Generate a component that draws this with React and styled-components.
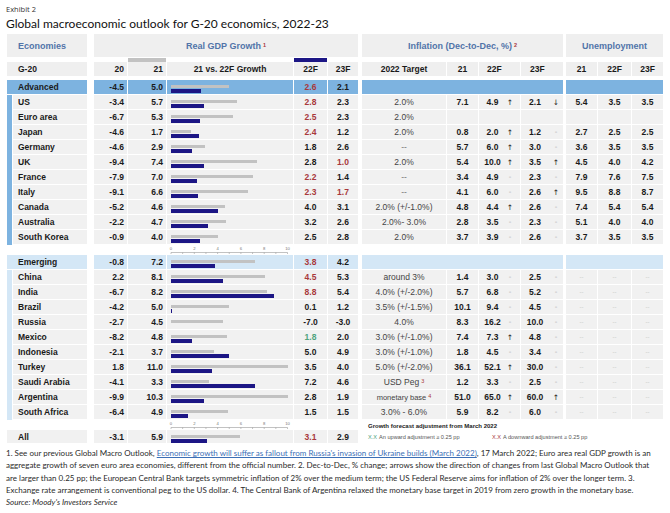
import React from 'react';
import styled, { createGlobalStyle } from 'styled-components';

const GlobalStyle = createGlobalStyle`
  html, body { margin: 0; padding: 0; background: #fff; }
  body { font-family: "Liberation Sans", Arial, sans-serif; color: #1a1a1a; }
`;

const COLS = '5px 74px 5px 33px 38px 126px 33px 30px 2px 84px 31px 41px 42px 1px 31px 33px 31px';
const SCALE = 11.65;
const RED = '#a8383b';
const GREEN = '#4fa37e';
const BLUE = '#7db3e0';
const LIGHT = '#d4e7f6';
const GREY = '#f1f1f1';
const HEAD = '#5174a9';

const Page = styled.div`
  width: 670px;
  height: 513px;
  overflow: hidden;
  box-sizing: border-box;
  padding: 4px 0 0 6px;
`;

const Exhibit = styled.div`
  font-family: "Open Sans", sans-serif;
  font-size: 7.5px;
  line-height: 11px;
  color: #333;
`;

const Title = styled.h1`
  margin: 0;
  font-family: Lato, sans-serif;
  font-weight: 400;
  font-size: 12px;
  line-height: 17px;
  color: #111;
`;

const Table = styled.div`
  margin-top: 2px;
  padding-left: 1px;
`;

const Row = styled.div`
  display: grid;
  grid-template-columns: ${COLS};
  column-gap: 1px;
  height: ${p => p.$h}px;
  margin-bottom: ${p => p.$mb || 0}px;
`;

const Cell = styled.div`
  grid-column: ${p => p.$col};
  box-sizing: border-box;
  border-bottom: ${p => (p.$flat ? 'none' : '1px solid #fff')};
  background: ${p => p.$bg || GREY};
  display: flex;
  align-items: center;
  justify-content: ${p => p.$justify || 'center'};
  padding: ${p => p.$pad || '0'};
  font-size: 8.5px;
  font-weight: ${p => (p.$light ? 400 : 700)};
  color: ${p => p.$color || '#1a1a1a'};
  white-space: nowrap;
`;

const HeadCell = styled(Cell)`
  font-size: 9px;
  color: ${HEAD};
  border-bottom: none;
  background: #efefef;
`;

const Sup = styled.sup`
  color: ${RED};
  font-size: 5.5px;
  margin-left: 2px;
  position: relative;
  top: -1px;
`;

const LegendBar = styled.div`
  grid-column: ${p => p.$col};
  height: 4px;
  align-self: start;
  margin-top: 1px;
  background: ${p => p.$color};
`;

const Chart = styled(Cell)`
  flex-direction: column;
  align-items: flex-start;
  justify-content: flex-start;
  padding: 5px 0 0 4px;
  gap: 1px;
`;

const Bar = styled.div`
  height: ${p => p.$h}px;
  background: ${p => p.$color};
`;

const Split = styled(Cell)`
  display: grid;
  grid-template-columns: ${p => p.$tpl};
  justify-content: start;
  align-items: center;
`;

const Num = styled.span`
  text-align: center;
`;

const Arrow = styled.span`
  text-align: center;
  font-family: "DejaVu Sans", sans-serif;
  font-weight: 400;
  font-size: ${p => (p.$dash ? '7px' : '7.5px')};
  color: ${p => (p.$dash ? '#aaa' : '#222')};
`;

const Dim = styled.span`
  font-size: 6px;
  font-weight: 400;
  color: #c4c4c4;
`;

const AxisCell = styled.div`
  grid-column: 6;
  display: flex;
  align-items: flex-start;
`;

const LegendTitle = styled.div`
  grid-column: 10 / 18;
  font-size: 6px;
  font-weight: 700;
  color: #222;
  padding-left: 6px;
  align-self: end;
  line-height: 8px;
`;

const LegendItems = styled.div`
  grid-column: 10 / 18;
  display: flex;
  align-items: center;
  padding-left: 6px;
  font-size: 5.6px;
  color: #555;
`;

const LegendItem = styled.span`
  width: ${p => p.$w}px;
  b { font-weight: 400; color: ${p => p.$color}; margin-right: 2px; }
`;

const Notes = styled.div`
  margin-top: 3px;
  font-family: Lato, sans-serif;
  font-size: 8px;
  line-height: 12.3px;
  color: #2a2a2a;
  white-space: nowrap;
  a { color: #3b6fb6; text-decoration: underline; }
  i { display: block; }
`;

const advanced = [
  ['US', -3.4, 5.7, [2.8, RED], [2.3], '2.0%', ['7.1', '4.9', '↑', '2.1', '↓'], ['5.4', '3.5', '3.5']],
  ['Euro area', -6.7, 5.3, [2.5, RED], [2.3], '2.0%', null, null],
  ['Japan', -4.6, 1.7, [2.4, RED], [1.2], '2.0%', ['0.8', '2.0', '↑', '1.2', '-'], ['2.7', '2.5', '2.5']],
  ['Germany', -4.6, 2.9, [1.8], [2.6], '--', ['5.7', '6.0', '↑', '3.0', '-'], ['3.6', '3.5', '3.5']],
  ['UK', -9.4, 7.4, [2.8], [1.0, RED], '2.0%', ['5.4', '10.0', '↑', '3.5', '↑'], ['4.5', '4.0', '4.2']],
  ['France', -7.9, 7.0, [2.2, RED], [1.4], '--', ['3.4', '4.9', '-', '2.3', '-'], ['7.9', '7.6', '7.5']],
  ['Italy', -9.1, 6.6, [2.3, RED], [1.7, RED], '--', ['4.1', '6.0', '-', '2.6', '↑'], ['9.5', '8.8', '8.7']],
  ['Canada', -5.2, 4.6, [4.0], [3.1], '2.0% (+/-1.0%)', ['4.8', '4.4', '↑', '2.6', '-'], ['7.4', '5.4', '5.4']],
  ['Australia', -2.2, 4.7, [3.2], [2.6], '2.0%- 3.0%', ['2.8', '3.5', '-', '2.3', '-'], ['5.1', '4.0', '4.0']],
  ['South Korea', -0.9, 4.0, [2.5], [2.8], '2.0%', ['3.7', '3.9', '-', '2.6', '-'], ['3.7', '3.5', '3.5']],
];

const emerging = [
  ['China', 2.2, 8.1, [4.5, RED], [5.3], 'around 3%', ['1.4', '3.0', '-', '2.5', '-'], 'dim'],
  ['India', -6.7, 8.2, [8.8, RED], [5.4], '4.0% (+/-2.0%)', ['5.7', '6.8', '-', '5.2', '-'], 'dim'],
  ['Brazil', -4.2, 5.0, [0.1], [1.2], '3.5% (+/-1.5%)', ['10.1', '9.4', '-', '4.5', '-'], 'dim'],
  ['Russia', -2.7, 4.5, [-7.0], [-3.0], '4.0%', ['8.3', '16.2', '-', '10.0', '-'], 'dim'],
  ['Mexico', -8.2, 4.8, [1.8, GREEN], [2.0], '3.0% (+/-1.0%)', ['7.4', '7.3', '↑', '4.8', '-'], 'dim'],
  ['Indonesia', -2.1, 3.7, [5.0], [4.9], '3.0% (+/-1.0%)', ['1.8', '4.5', '-', '3.4', '-'], 'dim'],
  ['Turkey', 1.8, 11.0, [3.5], [4.0], '5.0% (+/-2.0%)', ['36.1', '52.1', '↑', '30.0', '-'], 'dim'],
  ['Saudi Arabia', -4.1, 3.3, [7.2], [4.6], ['USD Peg', '3'], ['1.2', '3.3', '-', '2.5', '-'], 'dim'],
  ['Argentina', -9.9, 10.3, [2.8], [1.9], ['monetary base', '4'], ['51.0', '65.0', '↑', '60.0', '↑'], 'dim'],
  ['South Africa', -6.4, 4.9, [1.5], [1.5], '3.0% - 6.0%', ['5.9', '8.2', '-', '6.0', '-'], 'dim'],
];

const fmt = v => v.toFixed(1);
const barW = v => Math.max(0, Math.min(10, v)) * SCALE;

const GdpCells = ({ g20, g21, f22, f23, bg }) => (
  <>
    <Cell $col="4" $bg={bg} $justify="flex-end" $pad="0 3px 0 0">{fmt(g20)}</Cell>
    <Cell $col="5" $bg={bg} $justify="flex-end" $pad="0 3px 0 0">{fmt(g21)}</Cell>
    <Chart $col="6" $bg={bg}>
      <Bar $h={3} $color="#c2c2c2" style={{ width: barW(g21) }} />
      <Bar $h={3.5} $color="#1c1685" style={{ width: barW(f22[0]) }} />
    </Chart>
    <Cell $col="7" $bg={bg} $color={f22[1]}>{fmt(f22[0])}</Cell>
    <Cell $col="8" $bg={bg} $color={f23[1]}>{fmt(f23[0])}</Cell>
  </>
);

const Target = ({ t }) => {
  if (Array.isArray(t)) {
    return (
      <Cell $col="10" $light $color="#444" style={{ fontSize: t[0].length > 8 ? '7.5px' : undefined }}>
        {t[0]}<Sup>{t[1]}</Sup>
      </Cell>
    );
  }
  return <Cell $col="10" $light $color={t === '--' ? '#777' : '#444'}>{t}</Cell>;
};

const Inflation = ({ inf }) => {
  if (!inf) {
    return (
      <>
        <Cell $col="11" />
        <Cell $col="12" />
        <Cell $col="13" />
      </>
    );
  }
  const [a, b, ab, c, ac] = inf;
  return (
    <>
      <Cell $col="11">{a}</Cell>
      <Split $col="12" $tpl="27px 8px">
        <Num>{b}</Num>
        <Arrow $dash={ab === '-'}>{ab}</Arrow>
      </Split>
      <Split $col="13" $tpl="28px 14px">
        <Num>{c}</Num>
        <Arrow $dash={ac === '-'}>{ac}</Arrow>
      </Split>
    </>
  );
};

const Unemp = ({ u }) => {
  if (u === 'dim') {
    return [15, 16, 17].map(c => <Cell key={c} $col={String(c)}><Dim>--</Dim></Cell>);
  }
  const vals = u || ['', '', ''];
  return vals.map((v, i) => <Cell key={i} $col={String(15 + i)}>{v}</Cell>);
};

const DataRow = ({ r, group }) => {
  const [name, g20, g21, f22, f23, tgt, inf, u] = r;
  return (
    <Row $h={15}>
      <Cell $col="1" $flat $bg={group} />
      <Cell $col="2" $justify="flex-start" $pad="0 0 0 5px">{name}</Cell>
      <GdpCells g20={g20} g21={g21} f22={f22} f23={f23} />
      <Target t={tgt} />
      <Inflation inf={inf} />
      <Unemp u={u} />
    </Row>
  );
};

const GroupRow = ({ name, g20, g21, f22, f23, bg }) => (
  <Row $h={15}>
    <Cell $col="1 / 3" $bg={bg} $justify="flex-start" $pad="0 0 0 11px">{name}</Cell>
    <GdpCells g20={g20} g21={g21} f22={f22} f23={f23} bg={bg} />
    <Cell $col="10 / 14" $bg={bg} />
    <Cell $col="15 / 18" $bg={bg} />
  </Row>
);

const Axis = () => {
  const ticks = Array.from({ length: 11 }, (_, i) => 4 + i * SCALE);
  return (
    <AxisCell>
      <svg width="126" height="10" viewBox="0 0 126 10">
        {[0, 2, 4, 6, 8, 10].map(n => (
          <text key={n} x={4 + n * SCALE} y="4.5" fontSize="4.2" fill="#777" textAnchor="middle"
            fontFamily="Liberation Sans, sans-serif">{n}</text>
        ))}
        <line x1="4" x2={4 + 10 * SCALE} y1="7.5" y2="7.5" stroke="#999" strokeWidth="0.6" />
        {ticks.map((x, i) => (
          <line key={i} x1={x} x2={x} y1="7.5" y2="9" stroke="#999" strokeWidth="0.6" />
        ))}
      </svg>
    </AxisCell>
  );
};

export default function App() {
  return (
    <Page>
      <GlobalStyle />
      <Exhibit>Exhibit 2</Exhibit>
      <Title>Global macroeconomic outlook for G-20 economics, 2022-23</Title>
      <Table>
        <Row $h={23}>
          <HeadCell $col="1 / 3" $justify="flex-start" $pad="0 0 0 11px">Economies</HeadCell>
          <HeadCell $col="4 / 9">Real GDP Growth<Sup>1</Sup></HeadCell>
          <HeadCell $col="10 / 14">Inflation (Dec-to-Dec, %)<Sup>2</Sup></HeadCell>
          <HeadCell $col="15 / 18">Unemployment</HeadCell>
        </Row>
        <Row $h={5}>
          <LegendBar $col="5" $color="#c2c2c2" />
          <LegendBar $col="7" $color="#1c1685" />
        </Row>
        <Row $h={14} $mb={4}>
          <Cell $col="1 / 3" $bg="#efefef" $flat $justify="flex-start" $pad="0 0 0 11px">G-20</Cell>
          <Cell $col="4" $bg="#efefef" $flat $justify="flex-end" $pad="0 3px 0 0">20</Cell>
          <Cell $col="5" $bg="#efefef" $flat $justify="flex-end" $pad="0 3px 0 0">21</Cell>
          <Cell $col="6" $bg="#efefef" $flat>21 vs. 22F Growth</Cell>
          <Cell $col="7" $bg="#efefef" $flat>22F</Cell>
          <Cell $col="8" $bg="#efefef" $flat>23F</Cell>
          <Cell $col="10" $bg="#efefef" $flat>2022 Target</Cell>
          <Cell $col="11" $bg="#efefef" $flat>21</Cell>
          <Cell $col="12" $bg="#efefef" $flat $justify="flex-start" $pad="0 0 0 8px">22F</Cell>
          <Cell $col="13" $bg="#efefef" $flat $justify="flex-start" $pad="0 0 0 9px">23F</Cell>
          <Cell $col="15" $bg="#efefef" $flat>21</Cell>
          <Cell $col="16" $bg="#efefef" $flat>22F</Cell>
          <Cell $col="17" $bg="#efefef" $flat>23F</Cell>
        </Row>
        <GroupRow name="Advanced" g20={-4.5} g21={5.0} f22={[2.6, RED]} f23={[2.1]} bg={BLUE} />
        {advanced.map(r => <DataRow key={r[0]} r={r} group={BLUE} />)}
        <Row $h={10}>
          <Axis />
        </Row>
        <GroupRow name="Emerging" g20={-0.8} g21={7.2} f22={[3.8, RED]} f23={[4.2]} bg={LIGHT} />
        {emerging.map(r => <DataRow key={r[0]} r={r} group={LIGHT} />)}
        <Row $h={10}>
          <Axis />
          <LegendTitle>Growth forecast adjustment from March 2022</LegendTitle>
        </Row>
        <Row $h={14}>
          <Cell $col="1 / 3" $justify="flex-start" $pad="0 0 0 11px">All</Cell>
          <GdpCells g20={-3.1} g21={5.9} f22={[3.1, RED]} f23={[2.9]} />
          <LegendItems>
            <LegendItem $w={124} $color={GREEN}><b>X.X</b>An upward adjustment ≥ 0.25 pp</LegendItem>
            <LegendItem $w={140} $color={RED}><b>X.X</b>A downward adjustment ≥ 0.25 pp</LegendItem>
          </LegendItems>
        </Row>
      </Table>
      <Notes>
        1. See our previous Global Macro Outlook, <a>Economic growth will suffer as fallout from Russia's invasion of Ukraine builds (March 2022)</a>, 17 March 2022; Euro area real GDP growth is an<br />
        aggregate growth of seven euro area economies, different from the official number. 2. Dec-to-Dec, % change; arrows show the direction of changes from last Global Macro Outlook that<br />
        are larger than 0.25 pp; the European Central Bank targets symmetric inflation of 2% over the medium term; the US Federal Reserve aims for inflation of 2% over the longer term. 3.<br />
        Exchange rate arrangement is conventional peg to the US dollar. 4. The Central Bank of Argentina relaxed the monetary base target in 2019 from zero growth in the monetary base.
        <i>Source: Moody's Investors Service</i>
      </Notes>
    </Page>
  );
}
